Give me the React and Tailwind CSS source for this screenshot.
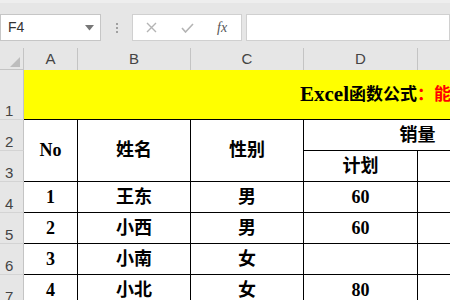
import React from 'react';

const cols = ['A', 'B', 'C', 'D', 'E'];

const rows = [
  { no: '1', name: '王东', sex: '男', plan: '60' },
  { no: '2', name: '小西', sex: '男', plan: '60' },
  { no: '3', name: '小南', sex: '女', plan: '' },
  { no: '4', name: '小北', sex: '女', plan: '80' },
];

const serif = "font-['Liberation_Serif','Noto_Sans_CJK_SC',serif]";
const sans = "font-['Liberation_Sans',sans-serif]";

// sheet cell: black grid line on right & bottom
const cell = `${serif} border-r border-b border-black bg-white flex items-center justify-center font-bold text-[18px] text-black`;
const rowHead = `${sans} bg-[#e6e6e6] border-r border-[#c4c4c4] border-b border-b-[#d4d4d4] flex items-end pl-[5px] pb-[1px] text-[15px] leading-none text-[#444]`;

const Toolbar = () => (
  <div className="h-[48px] bg-[#e6e6e6] border-t-[3px] border-[#eeeeee] flex items-start pt-[11px]">
    {/* name box */}
    <div className="w-[101px] h-[27px] bg-white border border-[#c6c6c6] flex items-center justify-between pl-[7px] pr-[6px]">
      <span className={`${sans} text-[14px] text-[#333]`}>F4</span>
      <svg width="9" height="6" viewBox="0 0 9 6"><path d="M0 0 H9 L4.5 5.5 Z" fill="#777" /></svg>
    </div>
    {/* grip dots */}
    <div className="w-[31px] h-[27px] flex items-center justify-center">
      <div className="flex flex-col gap-[2px]">
        <span className="w-[2px] h-[2px] bg-[#a0a0a0]" />
        <span className="w-[2px] h-[2px] bg-[#a0a0a0]" />
        <span className="w-[2px] h-[2px] bg-[#a0a0a0]" />
      </div>
    </div>
    {/* cancel / enter / fx */}
    <div className="w-[110px] h-[27px] bg-white border border-[#d0d0d0] flex items-center">
      <svg className="ml-[13px]" width="11" height="11" viewBox="0 0 11 11">
        <path d="M1 1 L10 10 M10 1 L1 10" stroke="#b4b4b4" strokeWidth="1.4" />
      </svg>
      <svg className="ml-[24px]" width="13" height="10" viewBox="0 0 13 10">
        <path d="M1 5 L4.5 9 L12 1" stroke="#b4b4b4" strokeWidth="1.6" fill="none" />
      </svg>
      <span className={`${serif} ml-[23px] text-[14px] italic text-[#555]`}>fx</span>
    </div>
    <div className="w-[4px]" />
    <div className="flex-1 h-[27px] bg-white border border-[#d0d0d0]" />
  </div>
);

export default function App() {
  return (
    <div className="w-[450px] h-[300px] overflow-hidden bg-white">
      <Toolbar />
      <div className="grid w-[532px] grid-cols-[24px_54px_113px_113px_114px_114px] grid-rows-[22px_50px_31px_31px_31px_31px_31px_31px]">
        {/* corner */}
        <div className="bg-[#e6e6e6] border-r border-b border-[#c4c4c4] flex items-end justify-end pr-[3px] pb-[2px]">
          <svg width="10" height="10" viewBox="0 0 10 10"><path d="M10 0 V10 H0 Z" fill="#bdbdbd" /></svg>
        </div>
        {cols.map((c) => (
          <div key={c} className={`${sans} bg-[#e6e6e6] border-r border-[#c4c4c4] flex items-center justify-center text-[15px] text-[#444]`}>
            {c}
          </div>
        ))}

        {/* row 1 - title */}
        <div className={rowHead}>1</div>
        <div className={`${serif} col-span-5 bg-[#ffff00] border-b border-black flex items-center pl-[276px] whitespace-nowrap overflow-hidden font-bold text-[21px] text-black`}>
          Excel<span className="text-[17px]">函数公式</span>
          <span className="text-[17px] text-[#ff0000]">：能</span>
        </div>

        {/* rows 2-3 header */}
        <div className={rowHead}>2</div>
        <div className={`${cell} row-span-2`}>No</div>
        <div className={`${cell} row-span-2`}>姓名</div>
        <div className={`${cell} row-span-2`}>性别</div>
        <div className={`${cell} col-span-2`}>销量</div>
        <div className={rowHead}>3</div>
        <div className={cell}>计划</div>
        <div className={cell}>实际</div>

        {rows.map((r, i) => (
          <React.Fragment key={r.no}>
            <div className={rowHead}>{i + 4}</div>
            <div className={cell}>{r.no}</div>
            <div className={cell}>{r.name}</div>
            <div className={cell}>{r.sex}</div>
            <div className={cell}>{r.plan}</div>
            <div className={cell}></div>
          </React.Fragment>
        ))}
      </div>
    </div>
  );
}
